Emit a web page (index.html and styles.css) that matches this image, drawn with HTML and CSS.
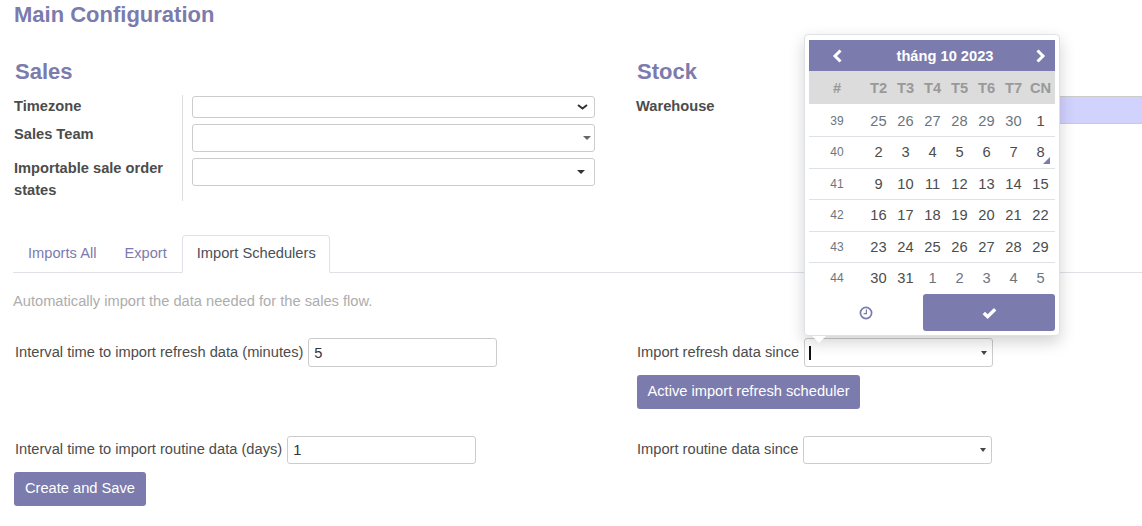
FILE: index.html
```html
<!DOCTYPE html>
<html lang="en">
<head>
    <meta charset="UTF-8">
    <meta name="viewport" content="width=device-width, initial-scale=1.0">
    <title>Main Configuration</title>
    <link rel="stylesheet" href="styles.css">
</head>
<body>

    <h1 class="page-title">Main Configuration</h1>

    <div class="columns">
        <section class="group">
            <h2>Sales</h2>
            <div class="group-fields">
                <label class="field-label">Timezone</label>
                <div class="field field-short pad-chevron">
                    <svg class="chevron-down" width="11" height="6" viewBox="0 0 11 6"><polyline points="1,1 5.5,4.5 10,1" fill="none" stroke="#333" stroke-width="2"/></svg>
                </div>
                <label class="field-label">Sales Team</label>
                <div class="field pad-small"><span class="caret caret-gray"></span></div>
                <label class="field-label">Importable sale order states</label>
                <div class="field pad-wide"><span class="caret caret-dark"></span></div>
            </div>
        </section>

        <section class="group">
            <h2>Stock</h2>
            <div class="stock-row">
                <label class="field-label">Warehouse</label>
                <div class="field field-required"></div>
            </div>
        </section>
    </div>

    <ul class="tabs">
        <li class="tab">Imports All</li>
        <li class="tab">Export</li>
        <li class="tab tab-active">Import Schedulers</li>
    </ul>

    <p class="hint">Automatically import the data needed for the sales flow.</p>

    <div class="schedulers">
        <div class="sched-cell">
            <div class="sched-row sched-tall">
                <span>Interval time to import refresh data (minutes)</span>
                <input class="text-input" type="text" value="5">
            </div>
        </div>
        <div class="sched-cell sched-right">
            <div class="sched-row sched-tall">
                <span>Import refresh data since</span>
                <div class="field field-date pad-date"><span class="text-cursor"></span><span class="caret caret-dark"></span></div>
            </div>
            <button class="btn">Active import refresh scheduler</button>
        </div>
        <div class="sched-cell sched-second">
            <div class="sched-row">
                <span>Interval time to import routine data (days)</span>
                <input class="text-input" type="text" value="1">
            </div>
            <button class="btn">Create and Save</button>
        </div>
        <div class="sched-cell sched-right sched-second">
            <div class="sched-row">
                <span>Import routine data since</span>
                <div class="field field-date pad-date"><span class="caret caret-dark"></span></div>
            </div>
        </div>
    </div>

    <!-- date picker popup, opened from "Import refresh data since" -->
    <div class="datepicker">
        <table class="cal">
            <thead>
                <tr class="cal-head">
                    <th><svg width="11" height="14" viewBox="0 0 11 14"><polyline points="8.5,1.5 3,7 8.5,12.5" fill="none" stroke="#fff" stroke-width="3"/></svg></th>
                    <th class="cal-month" colspan="6">tháng 10 2023</th>
                    <th><svg width="11" height="14" viewBox="0 0 11 14"><polyline points="2.5,1.5 8,7 2.5,12.5" fill="none" stroke="#fff" stroke-width="3"/></svg></th>
                </tr>
                <tr class="cal-days">
                    <th>#</th><th>T2</th><th>T3</th><th>T4</th><th>T5</th><th>T6</th><th>T7</th><th>CN</th>
                </tr>
            </thead>
            <tbody>
                <tr><td class="week">39</td><td class="old">25</td><td class="old">26</td><td class="old">27</td><td class="old">28</td><td class="old">29</td><td class="old">30</td><td>1</td></tr>
                <tr><td class="week">40</td><td>2</td><td>3</td><td>4</td><td>5</td><td>6</td><td>7</td><td class="today">8</td></tr>
                <tr><td class="week">41</td><td>9</td><td>10</td><td>11</td><td>12</td><td>13</td><td>14</td><td>15</td></tr>
                <tr><td class="week">42</td><td>16</td><td>17</td><td>18</td><td>19</td><td>20</td><td>21</td><td>22</td></tr>
                <tr><td class="week">43</td><td>23</td><td>24</td><td>25</td><td>26</td><td>27</td><td>28</td><td>29</td></tr>
                <tr><td class="week">44</td><td>30</td><td>31</td><td class="old">1</td><td class="old">2</td><td class="old">3</td><td class="old">4</td><td class="old">5</td></tr>
            </tbody>
        </table>
        <div class="cal-footer">
            <div class="cal-clock">
                <svg width="14" height="14" viewBox="0 0 14 14"><circle cx="7" cy="7" r="5.6" fill="none" stroke="#7c7bad" stroke-width="1.7"/><polyline points="7.4,3.6 7.4,7.6 4.6,7.6" fill="none" stroke="#7c7bad" stroke-width="1.2"/></svg>
            </div>
            <div class="cal-confirm">
                <svg width="15" height="12" viewBox="0 0 15 12"><polyline points="1.8,6 5.6,9.6 13.2,2.2" fill="none" stroke="#fff" stroke-width="3.4"/></svg>
            </div>
        </div>
    </div>

</body>
</html>
```

FILE: styles.css
```css
body {
    font-family: "Liberation Sans", Arial, sans-serif;
    font-size: 14.66px;
    line-height: 20px;
    color: #4c4c4c;
    margin: 0;
    padding: 2px 0 0 14px;
    background: #fff;
    overflow: hidden;
}
h1, h2 {
    font-size: 22px;
    line-height: 26px;
    font-weight: bold;
    color: #7c7bad;
    margin: 0;
}
.columns {
    display: grid;
    grid-template-columns: 622px 1fr;
    margin-top: 31px;
}
.group h2 {
    margin-bottom: 10px;
    padding-left: 1px;
}
.group-fields {
    display: grid;
    grid-template-columns: 169px 412px;
    grid-template-rows: 28px 34px 44px;
}
.field-label {
    display: block;
    font-weight: bold;
    line-height: 22px;
    padding-right: 10px;
    border-right: 1px solid #ddd;
}
.group-fields .field {
    margin: 1px 0 0 9px;
}
.stock-row {
    display: grid;
    grid-template-columns: 172px 1fr;
}
.stock-row .field-label {
    border-right: none;
}
.field {
    display: flex;
    align-items: center;
    justify-content: flex-end;
    box-sizing: border-box;
    height: 28px;
    border: 1px solid #ccc;
    border-radius: 3px;
    background: #fff;
}
.field-short {
    height: 22px;
}
.field-required {
    margin-top: 1px;
    background: #d2d2ff;
    border-width: 1px 0;
    border-radius: 0;
}
.field-date {
    width: 189px;
    height: 28px;
}
.pad-chevron { padding-right: 6px; }
.pad-small { padding-right: 3px; }
.pad-wide { padding-right: 9px; }
.pad-date { padding-right: 5px; }
.caret {
    width: 0;
    height: 0;
    border-style: solid;
    border-width: 4px 4px 0;
    border-color: #333 transparent transparent;
}
.caret-gray {
    border-top-color: #666;
}
.pad-date .caret {
    border-width: 4px 3.5px 0;
    border-top-color: #444;
}
.text-cursor {
    width: 2px;
    height: 14px;
    background: #111;
    margin-right: auto;
    margin-left: 4px;
}
.tabs {
    display: flex;
    list-style: none;
    margin: 34px 0 0 -1px;
    padding: 0;
    border-bottom: 1px solid #dee2e6;
}
.tab {
    box-sizing: border-box;
    height: 38px;
    padding: 7px 14px;
    line-height: 21px;
    color: #7c7bad;
    border-top: 1px solid transparent;
    margin-bottom: -1px;
}
.tab:first-child {
    padding-left: 15px;
}
.tab-active {
    margin-left: 1px;
    padding-right: 13px;
    color: #495057;
    background: #fff;
    border: 1px solid #dee2e6;
    border-bottom-color: #fff;
    border-radius: 4px 4px 0 0;
}
.hint {
    color: #adadad;
    margin: 18px 0 0 -1px;
}
.schedulers {
    display: grid;
    grid-template-columns: 622px 1fr;
    margin-top: 27px;
}
.sched-row {
    display: flex;
    align-items: center;
    gap: 5px;
    height: 28px;
}
.sched-row > span:first-child {
    margin-left: 1px;
    padding-bottom: 2px;
}
.sched-tall {
    height: 29px;
}
.sched-tall .field-date {
    height: 29px;
}
.sched-second {
    margin-top: 27px;
}
.sched-right .btn {
    margin-left: 1px;
    padding-left: 10.5px;
    padding-right: 10.5px;
}
.text-input {
    box-sizing: border-box;
    width: 189px;
    height: 100%;
    padding: 0 5px;
    font: inherit;
    color: #333;
    border: 1px solid #ccc;
    border-radius: 3px;
}
.btn {
    display: block;
    height: 34px;
    margin-top: 8px;
    padding: 0 11px 2px;
    font: inherit;
    color: #fff;
    background: #7c7bad;
    border: none;
    border-radius: 3px;
}
.datepicker {
    position: absolute;
    left: 804px;
    top: 34px;
    box-sizing: border-box;
    width: 256px;
    height: 302px;
    padding: 5px 4px 4px;
    background: #fff;
    border: 1px solid #dee2e6;
    border-radius: 4px;
    box-shadow: 0 6px 16px rgba(0, 0, 0, 0.18);
}
.datepicker::after {
    content: "";
    position: absolute;
    left: 7px;
    bottom: -8px;
    border-style: solid;
    border-width: 7px 7px 0;
    border-color: #fff transparent transparent;
}
.cal {
    width: 246px;
    table-layout: fixed;
    border-collapse: collapse;
}
.cal th, .cal td {
    padding: 0;
    text-align: center;
}
.cal tr > :last-child {
    padding-right: 1px;
}
.cal-days th:first-child {
    width: 56px;
}
.cal-days th {
    width: 27px;
    height: 33px;
    color: #999;
    background: #dcdcdc;
}
.cal-days th:last-child {
    width: 27px;
}
.cal-head th {
    height: 31px;
    color: #fff;
    background: #7c7bad;
}
.cal-head th:first-child {
    width: 56px;
}
.cal-head th:last-child {
    width: 27px;
}
.cal-head .cal-month {
    padding-right: 2px;
}
.cal-head svg {
    display: block;
    margin: 0 auto;
}
.cal td {
    height: 32px;
    box-sizing: border-box;
    border-top: 1px solid #dee2e6;
}
.cal tbody tr:nth-child(3) td, .cal tbody tr:nth-child(5) td {
    height: 31px;
}
.cal tbody tr:first-child td {
    border-top: none;
    padding-top: 2px;
}
.cal .week {
    font-size: 12px;
    color: #6c757d;
}
.cal .old {
    color: #6c757d;
}
.today {
    position: relative;
}
.today::after {
    content: "";
    position: absolute;
    right: 5px;
    bottom: 4px;
    border-style: solid;
    border-width: 0 0 7px 7px;
    border-color: transparent transparent #7c7bad;
}
.cal-footer {
    display: flex;
    height: 37px;
}
.cal-clock, .cal-confirm {
    display: flex;
    align-items: center;
    justify-content: center;
}
.cal-clock {
    width: 114px;
}
.cal-confirm {
    width: 132px;
    background: #7c7bad;
    border-radius: 3px;
}
```
